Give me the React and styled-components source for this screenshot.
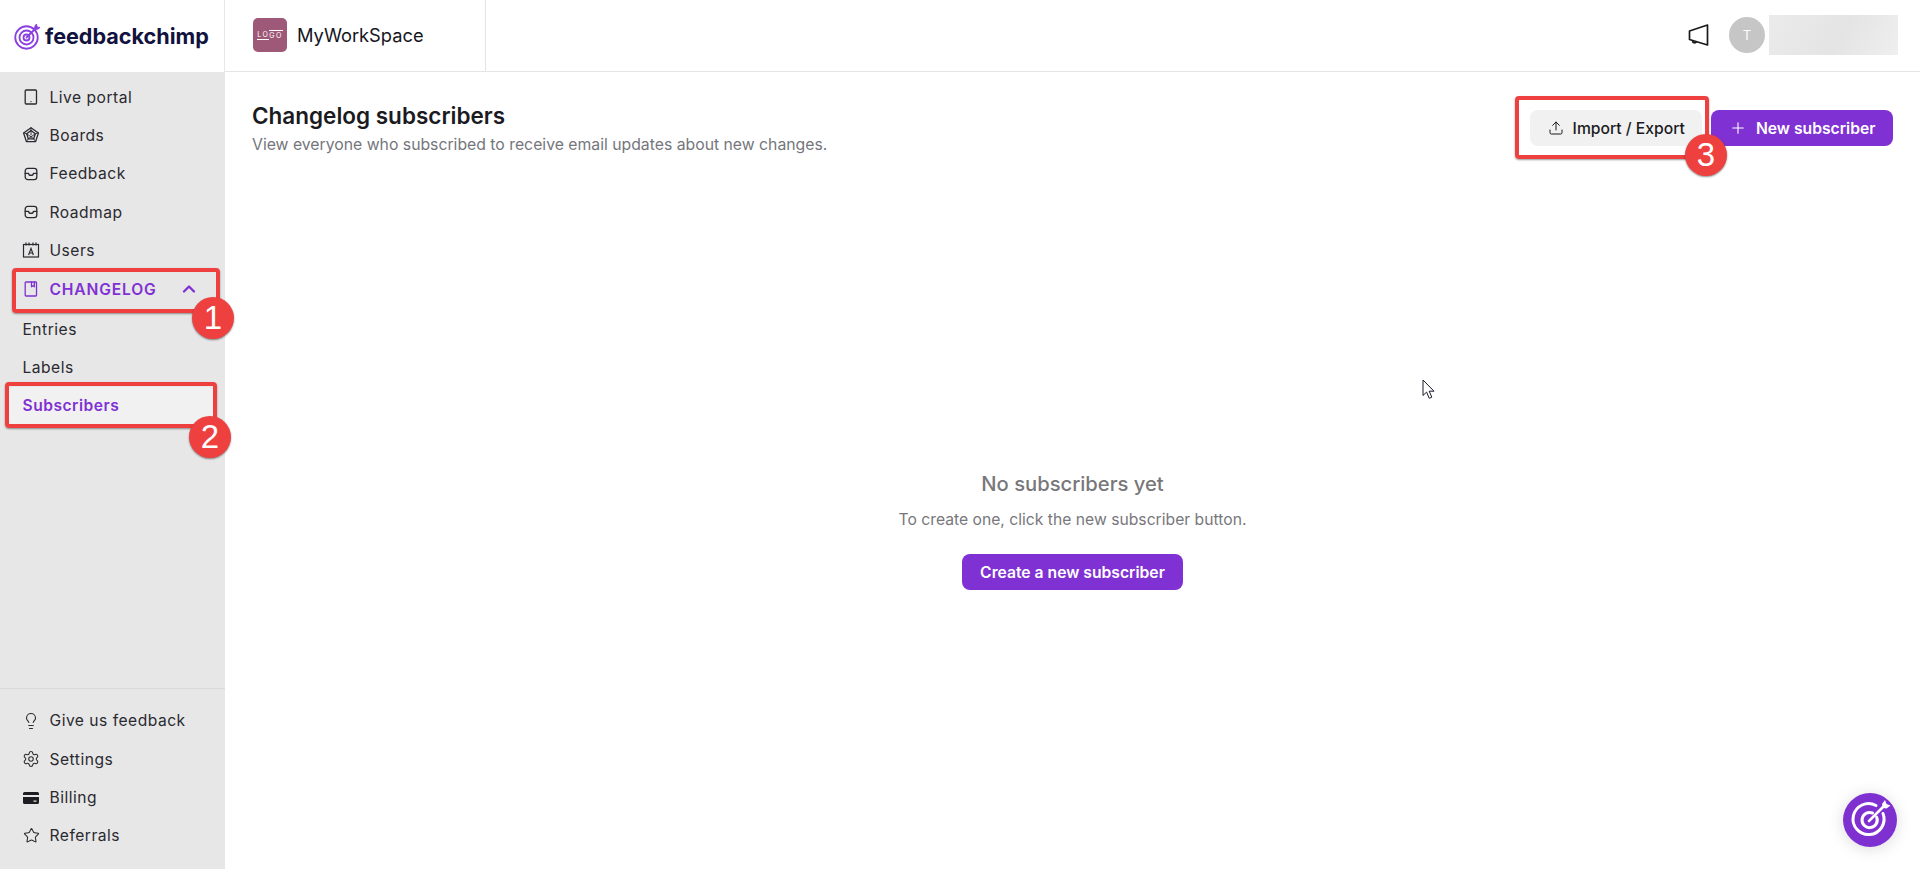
import React from 'react';
import styled, { createGlobalStyle } from 'styled-components';
import { ChevronUp, Lightbulb, Plus, Settings, Star, Upload } from 'lucide-react';

const PURPLE = '#8031d3';
const RED = '#ef4040';

const GlobalStyle = createGlobalStyle`
  html, body { margin: 0; padding: 0; height: 100%; background: #fff; overflow: hidden; }
  body { font-family: Inter, "Liberation Sans", sans-serif; color: #1b1b1f; }
  #root { height: 100%; }
  * { box-sizing: border-box; }
`;

const Page = styled.div`
  position: relative;
  display: grid;
  grid-template-columns: 225px 1fr;
  grid-template-rows: 72px 1fr;
  width: 1920px;
  height: 869px;
  overflow: hidden;
`;

const Brand = styled.div`
  display: flex;
  align-items: center;
  gap: 4px;
  padding-left: 14px;
  border-right: 1px solid #e5e7eb;
  font-size: 21.6px;
  font-weight: 700;
  color: #12123f;
`;

const TopBar = styled.header`
  display: flex;
  align-items: stretch;
  justify-content: space-between;
  border-bottom: 1px solid #e6e6e6;
`;

const Workspace = styled.div`
  display: flex;
  align-items: center;
  gap: 10px;
  width: 261px;
  padding-left: 28px;
  padding-bottom: 1px;
  border-right: 1px solid #e5e5e5;
  font-size: 18.3px;
  color: #15151c;
`;

const WorkspaceLogo = styled.div`
  display: flex;
  align-items: center;
  justify-content: center;
  width: 34px;
  height: 34px;
  border-radius: 5px;
  background: #9e5878;
  color: #fff;
  font-size: 7px;
  letter-spacing: 1.4px;
  line-height: 7px;
`;

const LogoPart = styled.span`
  padding: 1px 0;
  border-${p => p.$over ? 'top' : 'bottom'}: 1px solid #fff;
`;

const UserArea = styled.div`
  display: flex;
  align-items: center;
  padding-right: 22px;
  padding-bottom: 1px;
`;

const NewsButton = styled.div`
  display: flex;
  margin-right: 20px;
  color: #1a1a1a;
`;

const Avatar = styled.div`
  display: flex;
  align-items: center;
  justify-content: center;
  width: 36px;
  height: 36px;
  margin-right: 4px;
  border-radius: 50%;
  background: #c6c6c6;
  color: #fff;
  font-size: 13px;
`;

const BlurredName = styled.div`
  width: 129px;
  height: 40px;
  background: linear-gradient(120deg, #ebebeb 0%, #e4e4e4 55%, #efefef 100%);
`;

const Sidebar = styled.aside`
  display: flex;
  flex-direction: column;
  background: #e7e7e7;
`;

const NavGroup = styled.nav`
  display: flex;
  flex-direction: column;
  padding: ${p => p.$bottom ? '13px 0 14px' : '6px 0 0'};
  ${p => p.$bottom && 'margin-top: auto; border-top: 1px solid #d9d9d9;'}
`;

const NavItem = styled.div`
  display: flex;
  align-items: center;
  gap: 9.5px;
  height: 38.3px;
  padding-left: 22px;
  font-size: 15.6px;
  letter-spacing: 0.5px;
  color: #2a2a30;
`;

const IconSlot = styled.span`
  display: flex;
  align-items: center;
  justify-content: center;
  flex: none;
  width: 18px;
  height: 18px;
`;

const SectionItem = styled(NavItem)`
  color: ${PURPLE};
  font-weight: 600;
  letter-spacing: 0.85px;
  height: 39.7px;
  margin-bottom: 1px;
`;

const SectionChevron = styled.div`
  display: flex;
  margin-left: 13px;
`;

const SubItem = styled.div`
  display: flex;
  align-items: center;
  height: 38.3px;
  margin: 0 11px 0 8px;
  padding-left: 14.5px;
  border-radius: 6px;
  font-size: 15.6px;
  letter-spacing: 0.5px;
  color: ${p => p.$active ? PURPLE : '#2a2a30'};
  font-weight: ${p => p.$active ? 600 : 400};
  background: ${p => p.$active ? '#f1f1f1' : 'transparent'};
`;

const Main = styled.main`
  display: flex;
  flex-direction: column;
  padding: 30px 27px 0 27px;
`;

const PageHead = styled.div`
  display: flex;
  justify-content: space-between;
  align-items: flex-start;
`;

const Title = styled.h1`
  margin: 0;
  font-size: 22.5px;
  line-height: 28px;
  font-weight: 600;
  color: #1b1b1f;
`;

const Subtitle = styled.p`
  margin: 5px 0 0;
  font-size: 15.77px;
  line-height: 20px;
  color: #75767c;
`;

const Actions = styled.div`
  display: flex;
  gap: 9px;
  margin-top: 8px;
`;

const Button = styled.button`
  display: inline-flex;
  align-items: center;
  justify-content: center;
  gap: 9px;
  height: 36px;
  padding: 0 17.5px;
  border: 0;
  border-radius: 8px;
  font-family: inherit;
  font-size: 15.7px;
  font-weight: ${p => p.$ghost ? 500 : 600};
  background: ${p => p.$ghost ? '#f1f1f1' : PURPLE};
  color: ${p => p.$ghost ? '#1b1b1f' : '#fff'};
`;

const Empty = styled.section`
  display: flex;
  flex-direction: column;
  align-items: center;
  margin-top: 315px;
`;

const EmptyTitle = styled.h2`
  margin: 0;
  font-size: 20.2px;
  line-height: 28px;
  font-weight: 500;
  color: #77777a;
`;

const EmptyText = styled.p`
  margin: 12px 0 0;
  font-size: 15.7px;
  line-height: 20px;
  color: #77777c;
`;

const CreateButton = styled(Button)`
  margin-top: 24px;
  padding: 0 18px;
`;

/* review markers laid over the screenshot */
const MarkerBox = styled.div`
  position: absolute;
  left: ${p => p.$x}px;
  top: ${p => p.$y}px;
  width: ${p => p.$w}px;
  height: ${p => p.$h}px;
  border: 4px solid ${RED};
  border-radius: 4px;
  box-shadow: 0 1px 2px rgba(0, 0, 0, 0.4);
  pointer-events: none;
`;

const MarkerBadge = styled.div`
  position: absolute;
  left: ${p => p.$x - 21}px;
  top: ${p => p.$y - 21}px;
  display: flex;
  align-items: center;
  justify-content: center;
  width: 42px;
  height: 42px;
  border-radius: 50%;
  background: ${RED};
  box-shadow: 0 1px 2px rgba(0, 0, 0, 0.45);
  color: #fff;
  font-family: "Liberation Sans", Arial, sans-serif;
  font-size: 33px;
`;

const ChatBubble = styled.div`
  position: absolute;
  right: 23px;
  bottom: 22px;
  display: flex;
  width: 54px;
  height: 54px;
  border-radius: 50%;
  box-shadow: 0 2px 16px rgba(0, 0, 0, 0.14);
`;

const Cursor = styled.svg`
  position: absolute;
  left: 1422px;
  top: 379px;
`;

const Outline = ({ children, size = 18 }) => (
  <svg width={size} height={size} viewBox="0 0 18 18" fill="none" stroke="currentColor" strokeWidth="1.3" strokeLinejoin="round" strokeLinecap="round">
    {children}
  </svg>
);

const TabletIcon = () => (
  <Outline>
    <rect x="3.2" y="2" width="11.3" height="14" rx="1" />
    <path d="M9 13.6h.01" strokeWidth="1.4" />
  </Outline>
);

const BoardsIcon = () => (
  <Outline>
    <path d="M9 1.8 16.4 7 13.6 15.6H4.4L1.6 7Z" />
    <path d="M9 4.6 13.3 7.8 11.7 12.8H6.3L4.7 7.8Z" />
    <path d="M9 1.8V4.6M16 6.9 13.3 7.8M13.4 15.2 11.7 12.8M4.6 15.2 6.3 12.8M2 6.9 4.7 7.8M4.7 7.8 11.7 12.8M13.3 7.8 6.3 12.8M9 4.6V9" strokeWidth="0.9" />
  </Outline>
);

const TrayIcon = () => (
  <Outline>
    <rect x="3.2" y="3.4" width="11.6" height="11.2" rx="2.6" />
    <path d="M3.2 8.4h3.3c.2 1.4 1.2 2 2.5 2s2.300-.6 2.500-2h3.300" />
  </Outline>
);

const UsersIcon = () => (
  <svg width="18" height="18" viewBox="0 0 18 18" fill="none" stroke="currentColor" strokeWidth="1.2">
    <rect x="1.5" y="3.500" width="15" height="12.5" />
    <path d="M4 1.500v3M7 1.500v3M11 1.500v3M14 1.500v3" />
    <path d="M6.600 14 9 7.400 11.400 14M7.400 12h3.200" />
  </svg>
);

const ChangelogIcon = () => (
  <Outline>
    <rect x="3.200" y="2" width="11.300" height="14" rx="0.8" />
    <path d="M9.500 2v4.800l1.400-1 1.400 1V2" />
  </Outline>
);

const CardIcon = () => (
  <svg width="18" height="18" viewBox="0 0 18 18" fill="#1d1d22">
    <path d="M2.600 3h12.800A1.600 1.600 0 0 1 17 4.600V6H1V4.600A1.600 1.600 0 0 1 2.600 3Z" />
    <path fillRule="evenodd" d="M1 8h16v5.400a1.600 1.600 0 0 1-1.600 1.600H2.600A1.600 1.600 0 0 1 1 13.400ZM11.500 11.500v1.200h3v-1.200Z" />
  </svg>
);

const MegaphoneIcon = () => (
  <svg width="21" height="24" viewBox="0 0 21 24" fill="none" stroke="currentColor" strokeWidth="1.7" strokeLinejoin="round">
    <path d="M1.500 8 19.500 2V22L1.500 16.500Z" />
    <path d="M4.500 17.500a2.200 2.200 0 0 0 4.200 1" />
  </svg>
);

const Target = ({ size, ring, dart = ring }) => (
  <svg width={size} height={size} viewBox="0 0 54 54" fill="none" stroke={ring} strokeWidth="3.6" strokeLinecap="round">
    <circle cx="25" cy="29" r="22.500" />
    <circle cx="25" cy="29" r="14" />
    <circle cx="25" cy="29" r="6" />
    <path d="M25 29 45 9" stroke={dart} strokeWidth="3.600" />
    <path d="M42 6l3-4 1 6 6 1-4 3-6 1Z" fill={dart} stroke={dart} strokeWidth="2" />
  </svg>
);

const mainNav = [
  ['Live portal', TabletIcon],
  ['Boards', BoardsIcon],
  ['Feedback', TrayIcon],
  ['Roadmap', TrayIcon],
  ['Users', UsersIcon],
];

const bottomNav = [
  ['Give us feedback', () => <Lightbulb size={18} strokeWidth={1.5} />],
  ['Settings', () => <Settings size={18} strokeWidth={1.4} />],
  ['Billing', CardIcon],
  ['Referrals', () => <Star size={17} strokeWidth={1.5} />],
];

export default function App() {
  return (
    <Page>
      <GlobalStyle />
      <Brand>
        <Target size={27} ring="#8a3fe0" />
        feedbackchimp
      </Brand>
      <TopBar>
        <Workspace>
          <WorkspaceLogo>
            <LogoPart>LO</LogoPart>
            <LogoPart $over>GO</LogoPart>
          </WorkspaceLogo>
          MyWorkSpace
        </Workspace>
        <UserArea>
          <NewsButton><MegaphoneIcon /></NewsButton>
          <Avatar>T</Avatar>
          <BlurredName />
        </UserArea>
      </TopBar>

      <Sidebar>
        <NavGroup>
          {mainNav.map(([label, Icon]) => (
            <NavItem key={label}><IconSlot><Icon /></IconSlot>{label}</NavItem>
          ))}
          <SectionItem>
            <IconSlot><ChangelogIcon /></IconSlot>
            CHANGELOG
            <SectionChevron><ChevronUp size={20} strokeWidth={2.8} /></SectionChevron>
          </SectionItem>
          <SubItem>Entries</SubItem>
          <SubItem>Labels</SubItem>
          <SubItem $active>Subscribers</SubItem>
        </NavGroup>
        <NavGroup $bottom>
          {bottomNav.map(([label, Icon]) => (
            <NavItem key={label}><IconSlot><Icon /></IconSlot>{label}</NavItem>
          ))}
        </NavGroup>
      </Sidebar>

      <Main>
        <PageHead>
          <div>
            <Title>Changelog subscribers</Title>
            <Subtitle>View everyone who subscribed to receive email updates about new changes.</Subtitle>
          </div>
          <Actions>
            <Button $ghost><Upload size={16} strokeWidth={1.5} />Import / Export</Button>
            <Button><Plus size={18} strokeWidth={1.5} />New subscriber</Button>
          </Actions>
        </PageHead>
        <Empty>
          <EmptyTitle>No subscribers yet</EmptyTitle>
          <EmptyText>To create one, click the new subscriber button.</EmptyText>
          <CreateButton>Create a new subscriber</CreateButton>
        </Empty>
      </Main>

      <MarkerBox $x={12} $y={268} $w={208} $h={45} />
      <MarkerBadge $x={213} $y={318}>1</MarkerBadge>
      <MarkerBox $x={5} $y={382} $w={212} $h={46} />
      <MarkerBadge $x={210} $y={437}>2</MarkerBadge>
      <MarkerBox $x={1515} $y={96} $w={194} $h={63} />
      <MarkerBadge $x={1706} $y={155}>3</MarkerBadge>

      <Cursor width="13" height="21" viewBox="0 0 13 21">
        <path d="M1 1v15.500l3.600-3.400 2.600 6.200 2.600-1.100-2.600-6H12Z" fill="#fff" stroke="#1a1a2a" strokeWidth="1" />
      </Cursor>

      <ChatBubble>
        <svg width="54" height="54" viewBox="0 0 54 54">
          <circle cx="27" cy="27" r="27" fill="#7e30d1" />
          <g fill="none" stroke="#fff" strokeWidth="3" strokeLinecap="round">
            <path d="M40 20.500A15.500 15.500 0 1 1 33 12.500" />
            <path d="M33.600 24A7.600 7.600 0 1 1 29.500 20" />
            <path d="M26 28 41 13" strokeWidth="2.600" />
          </g>
          <path d="M39 11l3-4 1.500 4 4 1.500-4 3-3.500-.5Z" fill="#fff" />
        </svg>
      </ChatBubble>
    </Page>
  );
}
